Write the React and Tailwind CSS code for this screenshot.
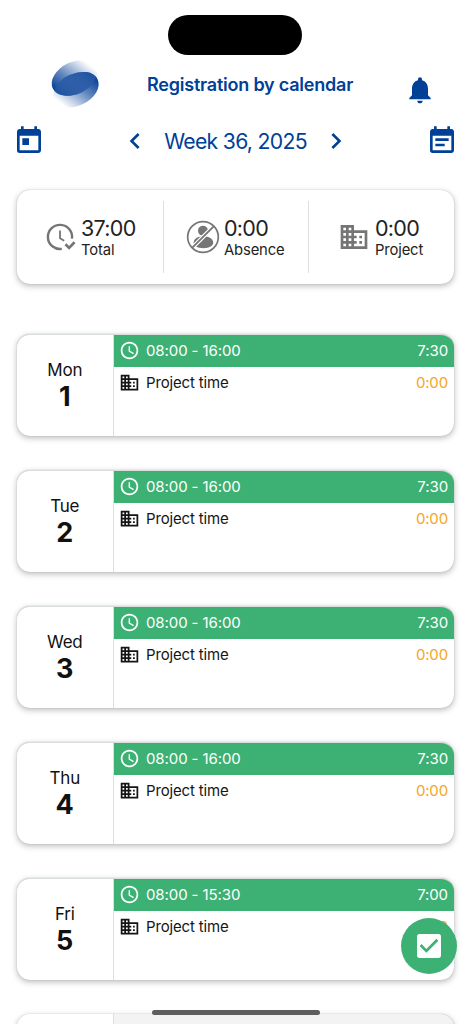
import React from "react";
import {
  MdToday,
  MdEventNote,
  MdNotifications,
  MdChevronLeft,
  MdChevronRight,
  MdAccessTime,
  MdBusiness,
  MdCheckBox,
} from "react-icons/md";

const days = [
  { name: "Mon", date: 1, hours: "08:00 - 16:00", total: "7:30" },
  { name: "Tue", date: 2, hours: "08:00 - 16:00", total: "7:30" },
  { name: "Wed", date: 3, hours: "08:00 - 16:00", total: "7:30" },
  { name: "Thu", date: 4, hours: "08:00 - 16:00", total: "7:30" },
  { name: "Fri", date: 5, hours: "08:00 - 15:30", total: "7:00" },
];

function Logo() {
  return (
    <svg className="block size-12 overflow-visible" viewBox="0 0 48 48">
      <defs>
        <linearGradient id="upper" x1="2" y1="26" x2="40" y2="7" gradientUnits="userSpaceOnUse">
          <stop offset="0" stopColor="#003c96" />
          <stop offset="0.45" stopColor="#003c96" stopOpacity="0.6" />
          <stop offset="1" stopColor="#003c96" stopOpacity="0" />
        </linearGradient>
        <linearGradient id="lower" x1="46" y1="22" x2="8" y2="41" gradientUnits="userSpaceOnUse">
          <stop offset="0" stopColor="#003c96" />
          <stop offset="0.45" stopColor="#003c96" stopOpacity="0.6" />
          <stop offset="1" stopColor="#003c96" stopOpacity="0" />
        </linearGradient>
        <clipPath id="upper-shape">
          <ellipse cx="23.400" cy="18" rx="24" ry="16" transform="rotate(-26 23.400 18)" />
        </clipPath>
      </defs>
      <ellipse cx="23.400" cy="18" rx="24" ry="16" transform="rotate(-26 23.400 18)" fill="url(#upper)" />
      <ellipse cx="25" cy="29.700" rx="24" ry="16" transform="rotate(-26 25 29.700)" fill="url(#lower)" />
      <g clipPath="url(#upper-shape)">
        <ellipse cx="25" cy="29.700" rx="24" ry="16" transform="rotate(-26 25 29.700)" fill="#3565aa" fillOpacity="0.55" />
      </g>
    </svg>
  );
}

function ClockCheck() {
  return (
    <svg className="block h-7 w-[30px]" viewBox="0 0 30 28" fill="none" stroke="#757575">
      <path d="M26 15.600A12.100 12.100 0 1 0 15.800 25.900" strokeWidth="2.4" />
      <path d="M14 7.500v7.800l4.200 2.500" strokeWidth="1.8" />
      <path d="M19.500 21.300l3.600 3.600 5.400-5.600" strokeWidth="2.7" />
    </svg>
  );
}

function AbsenceIcon() {
  return (
    <svg className="block size-[34px]" viewBox="0 0 34 34">
      <circle cx="17" cy="17" r="15.3" fill="none" stroke="#757575" strokeWidth="1.7" />
      <circle cx="17" cy="10.800" r="5" fill="#757575" />
      <path d="M7.600 23c0-4.300 4.200-6.700 9.800-6.700s9.800 2.700 9.800 6.300c0 3.500-3.800 5.600-9.800 5.600S7.600 26 7.600 23z" fill="#757575" />
      <path d="M7.500 26.500L26.500 7.500" stroke="#fff" strokeWidth="4" />
      <path d="M6.300 27.700L27.700 6.300" stroke="#757575" strokeWidth="1.800" />
    </svg>
  );
}

function Summary({ icon, value, label, className }) {
  return (
    <div className={"flex text-[#222] " + className}>
      {icon}
      <div>
        <div className="-mt-px text-[21.500px] leading-[26px] tracking-[-0.7px]">{value}</div>
        <div className="text-[14.800px] leading-[18px] tracking-[-0.15px]">{label}</div>
      </div>
    </div>
  );
}

function DayCard({ day }) {
  return (
    <section className="flex h-[102px] overflow-hidden rounded-[13px] border-t border-[#d8dfdb] bg-white shadow-[0_2px_6px_rgba(0,0,0,0.27),0_0_1px_rgba(0,0,0,0.3)]">
      <div className="flex w-[96.500px] shrink-0 flex-col items-center border-r border-[#dedede] pt-[25px] text-[#111]">
        <div className="text-[17px] leading-5 tracking-[-0.2px]">{day.name}</div>
        <div className="mt-[1px] text-[27px] leading-8 font-bold">{day.date}</div>
      </div>
      <div className="min-w-0 flex-1 text-[15px]">
        <div className="flex h-8 items-center bg-[#3cb173] pr-[6px] pl-[5.500px] text-white">
          <MdAccessTime className="mb-px size-[21px]" />
          <span className="ml-[6px] tracking-[-0.1px]">{day.hours}</span>
          <span className="ml-auto tracking-[-0.1px]">{day.total}</span>
        </div>
        <div className="flex h-8 items-center pr-[6px] pl-[5.500px] text-[#151515]">
          <MdBusiness className="mb-px size-[21px]" />
          <span className="ml-[6px] tracking-[-0.15px]">Project time</span>
          <span className="ml-auto tracking-[-0.15px] text-[#f5a623]">0:00</span>
        </div>
      </div>
    </section>
  );
}

export default function App() {
  return (
    <main className="relative h-[1024px] w-[471px] overflow-hidden bg-white font-[Inter,sans-serif]">
      <div className="flex justify-center pt-[15px]">
        <div className="mr-px h-[39.500px] w-[134px] rounded-full bg-black" />
      </div>
      <header className="flex h-[65.500px] items-start pr-[35px] pl-[51px] text-[#004097]">
        <div className="pt-[5.500px]"><Logo /></div>
        <h1 className="ml-[48px] pt-[18px] text-[18px] leading-6 font-semibold tracking-[-0.22px] whitespace-nowrap">Registration by calendar</h1>
        <MdNotifications className="mt-[19px] ml-auto size-8" />
      </header>
      <nav className="flex h-[42px] items-center justify-between pr-[13px] pl-[13px] text-[#004097]">
        <MdToday className="size-8" />
        <div className="flex items-center">
          <MdChevronLeft className="size-8" />
          <span className="w-[169px] pt-px text-center text-[21.200px] tracking-[-0.7px] whitespace-nowrap">Week 36, 2025</span>
          <MdChevronRight className="size-8" />
        </div>
        <MdEventNote className="size-8" />
      </nav>
      <section className="mx-[17px] mt-[28px] flex h-[94px] rounded-[13px] bg-white py-[11px] shadow-[0_2px_6px_rgba(0,0,0,0.27),0_0_1px_rgba(0,0,0,0.3)]">
        <Summary className="w-[147px] border-r border-[#dedede] pt-[14.500px] pl-[29px]" icon={<div className="mt-[7.500px] mr-[5px]"><ClockCheck /></div>} value="37:00" label="Total" />
        <Summary className="w-[145px] border-r border-[#dedede] pt-[14.500px] pl-[22px]" icon={<div className="mt-[4.500px] mr-[4px]"><AbsenceIcon /></div>} value="0:00" label="Absence" />
        <Summary className="flex-1 pt-[14.500px] pl-[29px]" icon={<MdBusiness className="mt-[5.500px] mr-[5px] size-8 text-[#757575]" />} value="0:00" label="Project" />
      </section>
      <div className="mx-[17px] mt-[50.400px] flex flex-col gap-[34px]">
        {days.map((day) => <DayCard key={day.name} day={day} />)}
        <section className="flex h-[102px] overflow-hidden rounded-[13px] bg-[#f3f3f3] shadow-[0_2px_6px_rgba(0,0,0,0.27),0_0_1px_rgba(0,0,0,0.3)]">
          <div className="w-[96.500px] border-r border-[#dedede] bg-white" />
        </section>
      </div>
      <button aria-label="Approve week" className="absolute top-[917.500px] left-[401px] flex size-14 items-center justify-center rounded-full bg-[#3cb173] text-white">
        <MdCheckBox className="size-8" />
      </button>
      <div className="absolute top-[1009.500px] left-[152px] h-[5.500px] w-[168px] rounded-full bg-[#5d5e5d]" />
    </main>
  );
}
